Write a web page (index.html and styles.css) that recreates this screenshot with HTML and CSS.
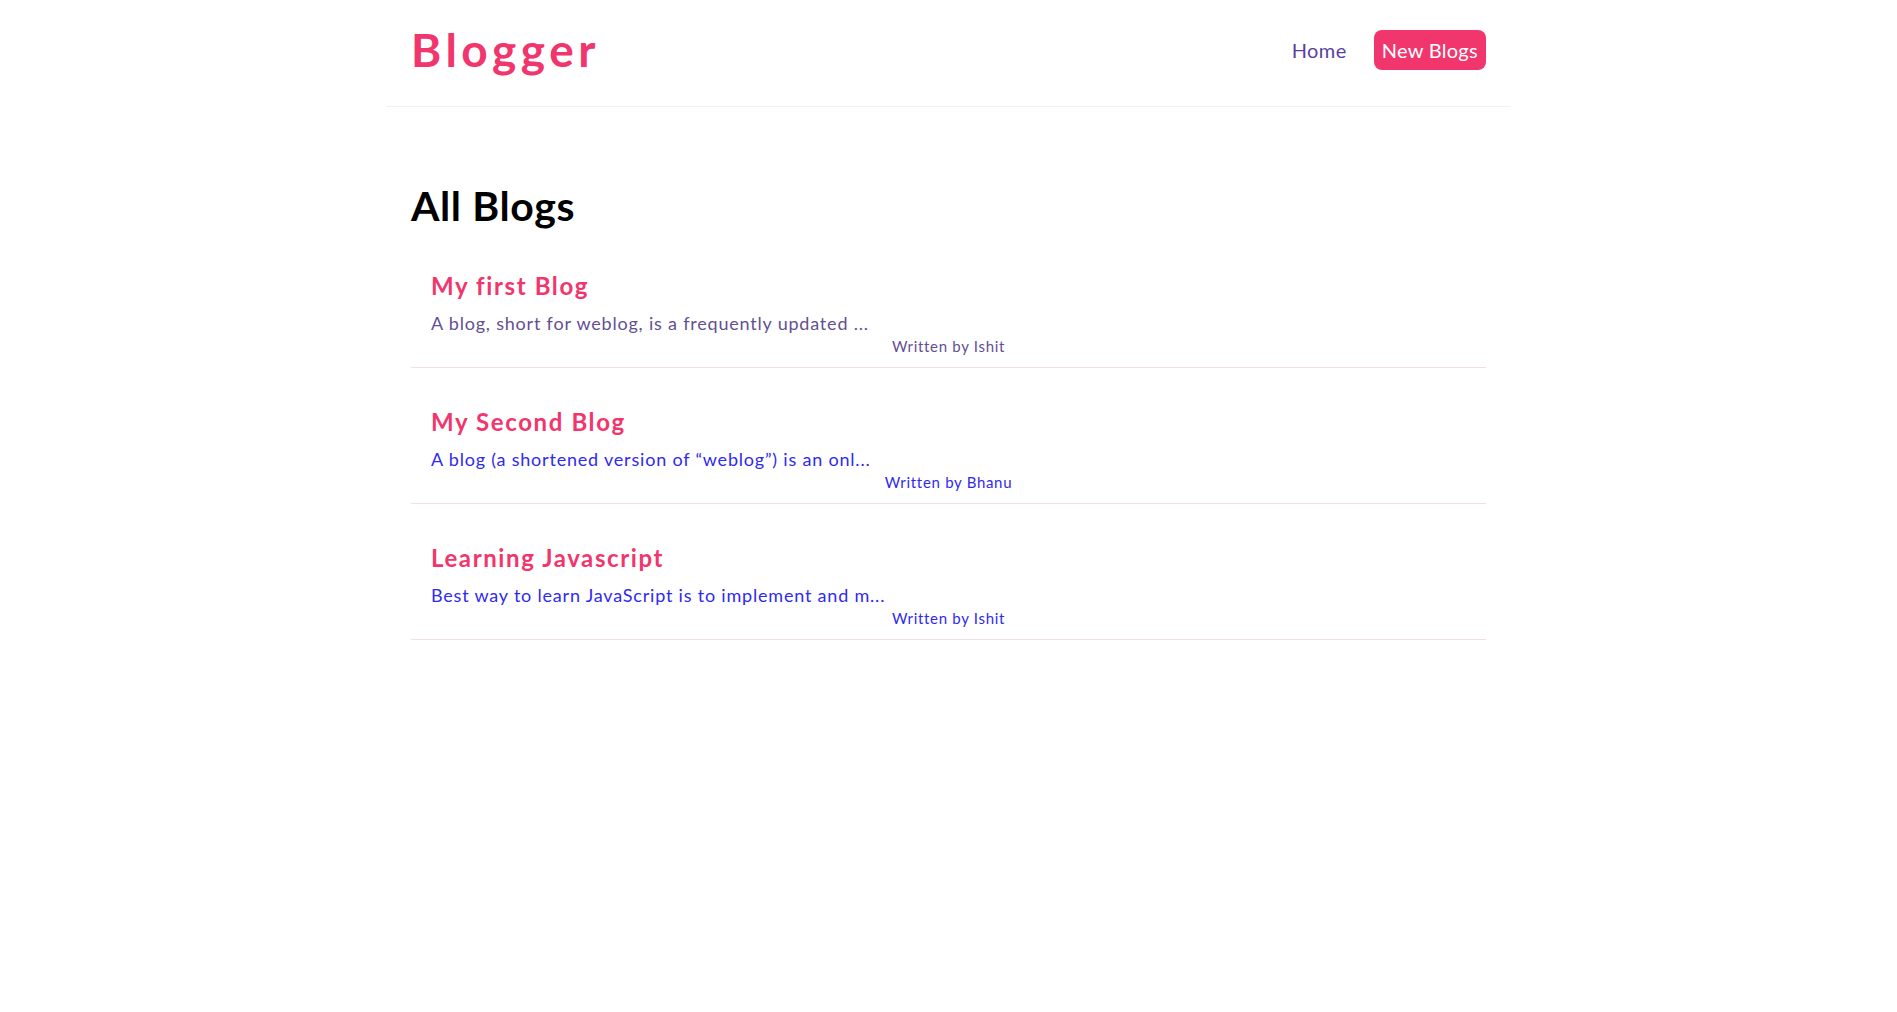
FILE: index.html
```html
<!DOCTYPE html>
<html lang="en">
<head>
<meta charset="utf-8">
<title>Blogger</title>
<link rel="stylesheet" href="styles.css">
</head>
<body>
  <nav class="navbar">
    <h1 class="brand">Blogger</h1>
    <div class="links">
      <a class="nav-link" href="#">Home</a>
      <a class="nav-button" href="#">New Blogs</a>
    </div>
  </nav>
  <main class="content">
    <h2 class="page-title">All Blogs</h2>
    <div class="blog-preview visited">
      <h3 class="blog-title">My first Blog</h3>
      <p class="blog-body">A blog, short for weblog, is a frequently updated ...</p>
      <p class="blog-author">Written by Ishit</p>
    </div>
    <div class="blog-preview">
      <h3 class="blog-title">My Second Blog</h3>
      <p class="blog-body">A blog (a shortened version of “weblog”) is an onl...</p>
      <p class="blog-author">Written by Bhanu</p>
    </div>
    <div class="blog-preview">
      <h3 class="blog-title">Learning Javascript</h3>
      <p class="blog-body">Best way to learn JavaScript is to implement and m...</p>
      <p class="blog-author">Written by Ishit</p>
    </div>
  </main>
</body>
</html>
```
FILE: styles.css
```css
* { box-sizing: border-box; }
body {
  margin: 0;
  font-family: Lato, "Noto Sans", sans-serif;
  background: #fff;
  color: #000;
}
.navbar {
  width: 1125px;
  margin: 0 auto;
  padding: 17px 25px 23px;
  height: 107px;
  display: flex;
  align-items: center;
  border-bottom: 1px solid #f2f2f2;
}
.brand {
  margin: 0;
  font-size: 46px;
  font-weight: 700;
  letter-spacing: 4.5px;
  color: #f1356d;
  line-height: 52px;
}
.links {
  margin-left: auto;
  display: flex;
  align-items: center;
}
.nav-link {
  font-size: 20px;
  letter-spacing: 0.4px;
  color: #5a3f9e;
  text-decoration: none;
  margin-right: 27px;
}
.nav-button {
  font-size: 20px;
  letter-spacing: 0.3px;
  color: #fff;
  background: #f1356d;
  text-decoration: none;
  border-radius: 8px;
  height: 40px;
  padding: 0 8px;
  display: flex;
  align-items: center;
}
.content {
  width: 1075px;
  margin: 0 auto;
  padding-top: 75px;
}
.page-title {
  margin: 0 0 31px;
  font-size: 41px;
  line-height: 48px;
  font-weight: 700;
  letter-spacing: 0.6px;
}
.blog-preview {
  padding: 10px 20px 11px;
  margin-bottom: 29px;
  border-bottom: 1px solid #f0dfe4;
  color: #2f2af0;
}
.blog-preview.visited { color: #634f94; }
.blog-title {
  margin: 0 0 10px;
  font-size: 24px;
  line-height: 30px;
  font-weight: 700;
  letter-spacing: 1.6px;
  color: #f1356d;
}
.blog-body {
  margin: 0;
  font-size: 18px;
  line-height: 24px;
  letter-spacing: 0.8px;
}
.blog-author {
  margin: 1px 0 0;
  font-size: 15px;
  line-height: 20px;
  letter-spacing: 0.7px;
  text-align: center;
}
```
